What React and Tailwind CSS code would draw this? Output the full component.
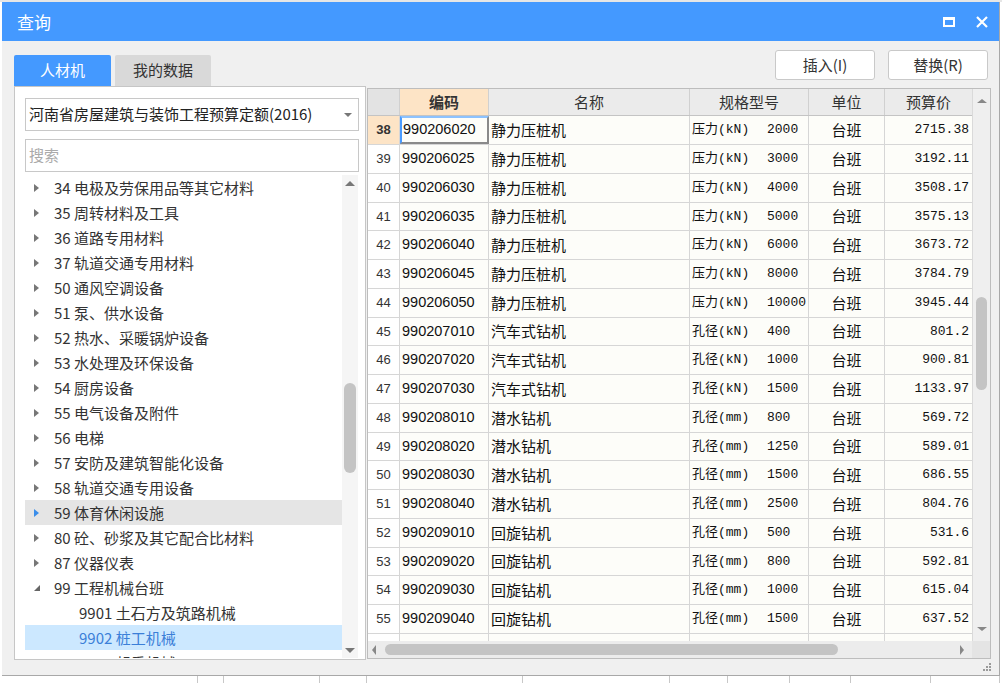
import React from "react";

const treeItems = [
  { label: "34 电极及劳保用品等其它材料" },
  { label: "35 周转材料及工具" },
  { label: "36 道路专用材料" },
  { label: "37 轨道交通专用材料" },
  { label: "50 通风空调设备" },
  { label: "51 泵、供水设备" },
  { label: "52 热水、采暖锅炉设备" },
  { label: "53 水处理及环保设备" },
  { label: "54 厨房设备" },
  { label: "55 电气设备及附件" },
  { label: "56 电梯" },
  { label: "57 安防及建筑智能化设备" },
  { label: "58 轨道交通专用设备" },
  { label: "59 体育休闲设施", hover: true },
  { label: "80 砼、砂浆及其它配合比材料" },
  { label: "87 仪器仪表" },
  { label: "99 工程机械台班", open: true },
  { label: "9901 土石方及筑路机械", child: true },
  { label: "9902 桩工机械", child: true, selected: true },
  { label: "9903 起重机械", child: true },
];

const rows = [
  ["38", "990206020", "静力压桩机", "压力(kN)", "2000", "2715.38"],
  ["39", "990206025", "静力压桩机", "压力(kN)", "3000", "3192.11"],
  ["40", "990206030", "静力压桩机", "压力(kN)", "4000", "3508.17"],
  ["41", "990206035", "静力压桩机", "压力(kN)", "5000", "3575.13"],
  ["42", "990206040", "静力压桩机", "压力(kN)", "6000", "3673.72"],
  ["43", "990206045", "静力压桩机", "压力(kN)", "8000", "3784.79"],
  ["44", "990206050", "静力压桩机", "压力(kN)", "10000", "3945.44"],
  ["45", "990207010", "汽车式钻机", "孔径(kN)", "400", "801.2"],
  ["46", "990207020", "汽车式钻机", "孔径(kN)", "1000", "900.81"],
  ["47", "990207030", "汽车式钻机", "孔径(kN)", "1500", "1133.97"],
  ["48", "990208010", "潜水钻机", "孔径(mm)", "800", "569.72"],
  ["49", "990208020", "潜水钻机", "孔径(mm)", "1250", "589.01"],
  ["50", "990208030", "潜水钻机", "孔径(mm)", "1500", "686.55"],
  ["51", "990208040", "潜水钻机", "孔径(mm)", "2500", "804.76"],
  ["52", "990209010", "回旋钻机", "孔径(mm)", "500", "531.6"],
  ["53", "990209020", "回旋钻机", "孔径(mm)", "800", "592.81"],
  ["54", "990209030", "回旋钻机", "孔径(mm)", "1000", "615.04"],
  ["55", "990209040", "回旋钻机", "孔径(mm)", "1500", "637.52"],
  ["", "", "", "", "", ""],
];

function TreeRow({ item }) {
  let bg = "";
  if (item.hover) bg = "bg-[#e5e5e5]";
  if (item.selected) bg = "bg-[#cce8ff]";
  return (
    <div className={`flex h-[25px] shrink-0 items-center text-[15px] ${bg} ${item.selected ? "text-[#3b7fd8]" : "text-[#333]"}`}>
      {item.child ? (
        <div className="w-[54px] shrink-0" />
      ) : (
        <div className="flex w-[29px] shrink-0 items-center pl-[9px]">
          {item.open ? (
            <div className="h-0 w-0 border-b-[6px] border-l-[6px] border-b-[#666] border-l-transparent" />
          ) : (
            <div className={`h-0 w-0 border-y-[4px] border-l-[5px] border-y-transparent ${item.hover ? "border-l-[#3b8eea]" : "border-l-[#777]"}`} />
          )}
        </div>
      )}
      <span className="whitespace-nowrap leading-none">{item.label}</span>
    </div>
  );
}

function GridRow({ row, index }) {
  const first = index === 0;
  const h = index % 4 === 3 ? "h-[28px]" : "h-[29px]";
  return (
    <div className={`flex ${h} shrink-0 border-b border-[#d6d6d6]`}>
      <div className={`flex w-[32px] shrink-0 items-center justify-center border-r border-[#d6d6d6] font-['Liberation_Sans',sans-serif] text-[13px] text-[#333] ${first ? "bg-[#fde4c6] font-bold" : "bg-white"}`}>
        {row[0]}
      </div>
      <div className={`flex w-[89px] shrink-0 items-center bg-[#fdfdf9] font-['Liberation_Sans',sans-serif] text-[14.5px] text-[#111] ${first ? "border-2 border-t-[#8cc2ff] border-l-[#4a9bff] border-r-[#8a8a8a] border-b-[#8a8a8a] pl-[1px]" : "border-r border-[#d6d6d6] pl-[2px]"}`}>
        {row[1]}
      </div>
      <div className="flex w-[201px] shrink-0 items-center border-r border-[#d6d6d6] bg-[#fdfdf9] pl-[2px] text-[15px] text-[#111]">
        {row[2]}
      </div>
      <div className="flex w-[119px] shrink-0 items-center border-r border-[#d6d6d6] bg-[#fdfdf9] pl-[2px] font-['Liberation_Mono','Noto_Sans_CJK_SC',monospace] text-[13px] text-[#111]">
        <span className="w-[75px] shrink-0 whitespace-nowrap">{row[3]}</span>
        <span>{row[4]}</span>
      </div>
      <div className="flex w-[76px] shrink-0 items-center justify-center border-r border-[#d6d6d6] bg-[#fdfdf9] text-[15px] text-[#111]">
        {row[0] ? "台班" : ""}
      </div>
      <div className="flex w-[87px] shrink-0 items-center justify-end bg-[#fdfdf9] pr-[3px] font-['Liberation_Mono',monospace] text-[13px] text-[#111]">
        {row[5]}
      </div>
    </div>
  );
}

export default function App() {
  const headers = [
    { t: "", w: "w-[32px]", c: "bg-[#e3e3e3] border-r" },
    { t: "编码", w: "w-[89px]", c: "bg-[#fde4c6] border-r font-bold text-[#222]" },
    { t: "名称", w: "w-[201px]", c: "bg-[#ebebeb] border-r" },
    { t: "规格型号", w: "w-[119px]", c: "bg-[#ebebeb] border-r" },
    { t: "单位", w: "w-[76px]", c: "bg-[#ebebeb] border-r" },
    { t: "预算价", w: "w-[87px]", c: "bg-[#ebebeb]" },
  ];
  const bottomLines = [198, 26, 96, 47, 156, 147, 58, 62, 61, 80, 69];

  return (
    <div className="flex h-[683px] w-[1002px] flex-col overflow-hidden bg-white font-['Noto_Sans_CJK_SC',sans-serif]">
      <div className="h-[2px] shrink-0 bg-[#e6e6e6]" />
      <div className="ml-[2px] flex h-[674px] w-[998px] shrink-0 flex-col border-r border-b border-[#a8a8a8] bg-[#f0f0f0]">
        {/* title bar */}
        <div className="flex h-[39px] shrink-0 items-center justify-between bg-[#4499ff] pl-[15px] pr-[11px] text-white">
          <span className="text-[17px] leading-none">查询</span>
          <div className="flex items-center gap-[21px]">
            <div className="h-[10px] w-[12px] border-2 border-t-[3px] border-white" />
            <svg width="12" height="12" viewBox="0 0 12 12">
              <path d="M1 1 L11 11 M11 1 L1 11" stroke="white" strokeWidth="2.2" />
            </svg>
          </div>
        </div>

        {/* body */}
        <div className="flex flex-1 flex-col pl-[12px] pr-[8px]">
          <div className="flex h-[45px] shrink-0 justify-between">
            <div className="flex items-end gap-[4px]">
              <div className="flex h-[31px] w-[97px] items-center justify-center rounded-t-[2px] bg-[#4499ff] text-[15px] text-white">人材机</div>
              <div className="flex h-[31px] w-[96px] items-center justify-center rounded-t-[2px] bg-[#d9d9d9] text-[15px] text-[#333]">我的数据</div>
            </div>
            <div className="mr-[3px] mt-[9px] flex gap-[13px]">
              <button className="h-[30px] w-[100px] rounded-[3px] border border-[#c9c9c9] bg-white font-['Noto_Sans_CJK_SC',sans-serif] text-[15px] text-[#333]">插入(I)</button>
              <button className="h-[30px] w-[100px] rounded-[3px] border border-[#c9c9c9] bg-white font-['Noto_Sans_CJK_SC',sans-serif] text-[15px] text-[#333]">替换(R)</button>
            </div>
          </div>

          <div className="flex h-[574px] shrink-0 gap-[1px]">
            {/* left panel */}
            <div className="flex w-[352px] shrink-0 flex-col border border-[#c6c6c6] bg-white pl-[10px] pr-[6px] pt-[11px]">
              <div className="flex h-[33px] shrink-0 items-center justify-between border border-[#c8c8c8] pl-[3px] pr-[6px]">
                <span className="whitespace-nowrap text-[15px] text-[#222]">河南省房屋建筑与装饰工程预算定额(2016)</span>
                <div className="h-0 w-0 border-x-[4px] border-t-[4px] border-x-transparent border-t-[#777]" />
              </div>
              <div className="mt-[8px] flex h-[33px] shrink-0 items-center border border-[#c8c8c8] pl-[3px]">
                <span className="text-[15px] text-[#aaa]">搜索</span>
              </div>
              <div className="mt-[3px] flex h-[483px] shrink-0">
                <div className="flex w-[317px] shrink-0 flex-col overflow-hidden">
                  {treeItems.map((item) => (
                    <TreeRow key={item.label} item={item} />
                  ))}
                </div>
                <div className="flex w-[16px] shrink-0 flex-col items-center bg-[#f5f5f5]">
                  <div className="flex h-[16px] items-center">
                    <div className="h-0 w-0 border-x-[5px] border-b-[5px] border-x-transparent border-b-[#777]" />
                  </div>
                  <div className="mt-[192px] h-[90px] w-[12px] rounded-full bg-[#c4c4c4]" />
                  <div className="flex-1" />
                  <div className="flex h-[16px] items-center">
                    <div className="h-0 w-0 border-x-[5px] border-t-[5px] border-x-transparent border-t-[#777]" />
                  </div>
                </div>
              </div>
            </div>

            {/* grid */}
            <div className="mt-[2px] flex h-[571px] w-[624px] shrink-0 flex-col border border-[#bdbdbd] bg-white">
              <div className="flex min-h-0 flex-1">
                <div className="flex w-[604px] shrink-0 flex-col overflow-hidden">
                  <div className="flex h-[27px] shrink-0 border-b border-[#c4c4c4]">
                    {headers.map((h, i) => (
                      <div key={i} className={`flex ${h.w} shrink-0 items-center justify-center border-[#d0d0d0] text-[15px] text-[#333] ${h.c}`}>
                        {h.t}
                      </div>
                    ))}
                  </div>
                  {rows.map((r, i) => (
                    <GridRow key={i} row={r} index={i} />
                  ))}
                </div>
                <div className="flex w-[18px] shrink-0 flex-col items-center border-l border-[#dadada] bg-[#efefef]">
                  <div className="flex h-[14px] items-end">
                    <div className="h-0 w-0 border-x-[5px] border-b-[4px] border-x-transparent border-b-[#888]" />
                  </div>
                  <div className="mt-[194px] h-[93px] w-[11px] rounded-full bg-[#c4c4c4]" />
                  <div className="flex-1" />
                  <div className="flex h-[14px] items-start">
                    <div className="h-0 w-0 border-x-[5px] border-t-[4px] border-x-transparent border-t-[#888]" />
                  </div>
                </div>
              </div>
              <div className="flex h-[17px] shrink-0">
                <div className="flex w-[604px] items-center bg-[#ececec]">
                  <div className="ml-[4px] h-0 w-0 border-y-[5px] border-r-[4px] border-y-transparent border-r-[#888]" />
                  <div className="ml-[9px] h-[11px] w-[453px] rounded-full bg-[#c4c4c4]" />
                  <div className="flex-1" />
                  <div className="mr-[8px] h-0 w-0 border-y-[5px] border-l-[4px] border-y-transparent border-l-[#888]" />
                </div>
                <div className="w-[18px] bg-[#e4e4e4]" />
              </div>
            </div>
          </div>

          <div className="flex flex-1 items-end justify-end pb-[4px] pr-[0px]">
            <svg width="8" height="8" viewBox="0 0 8 8">
              <rect x="6" y="0" width="2" height="2" fill="#9a9a9a" />
              <rect x="3" y="3" width="2" height="2" fill="#9a9a9a" />
              <rect x="6" y="3" width="2" height="2" fill="#9a9a9a" />
              <rect x="0" y="6" width="2" height="2" fill="#9a9a9a" />
              <rect x="3" y="6" width="2" height="2" fill="#9a9a9a" />
              <rect x="6" y="6" width="2" height="2" fill="#9a9a9a" />
            </svg>
          </div>
        </div>
      </div>
      <div className="flex flex-1">
        {bottomLines.map((w, i) => (
          <div key={i} style={{ width: w }} className="shrink-0 border-r border-[#c8c8c8]" />
        ))}
      </div>
    </div>
  );
}
